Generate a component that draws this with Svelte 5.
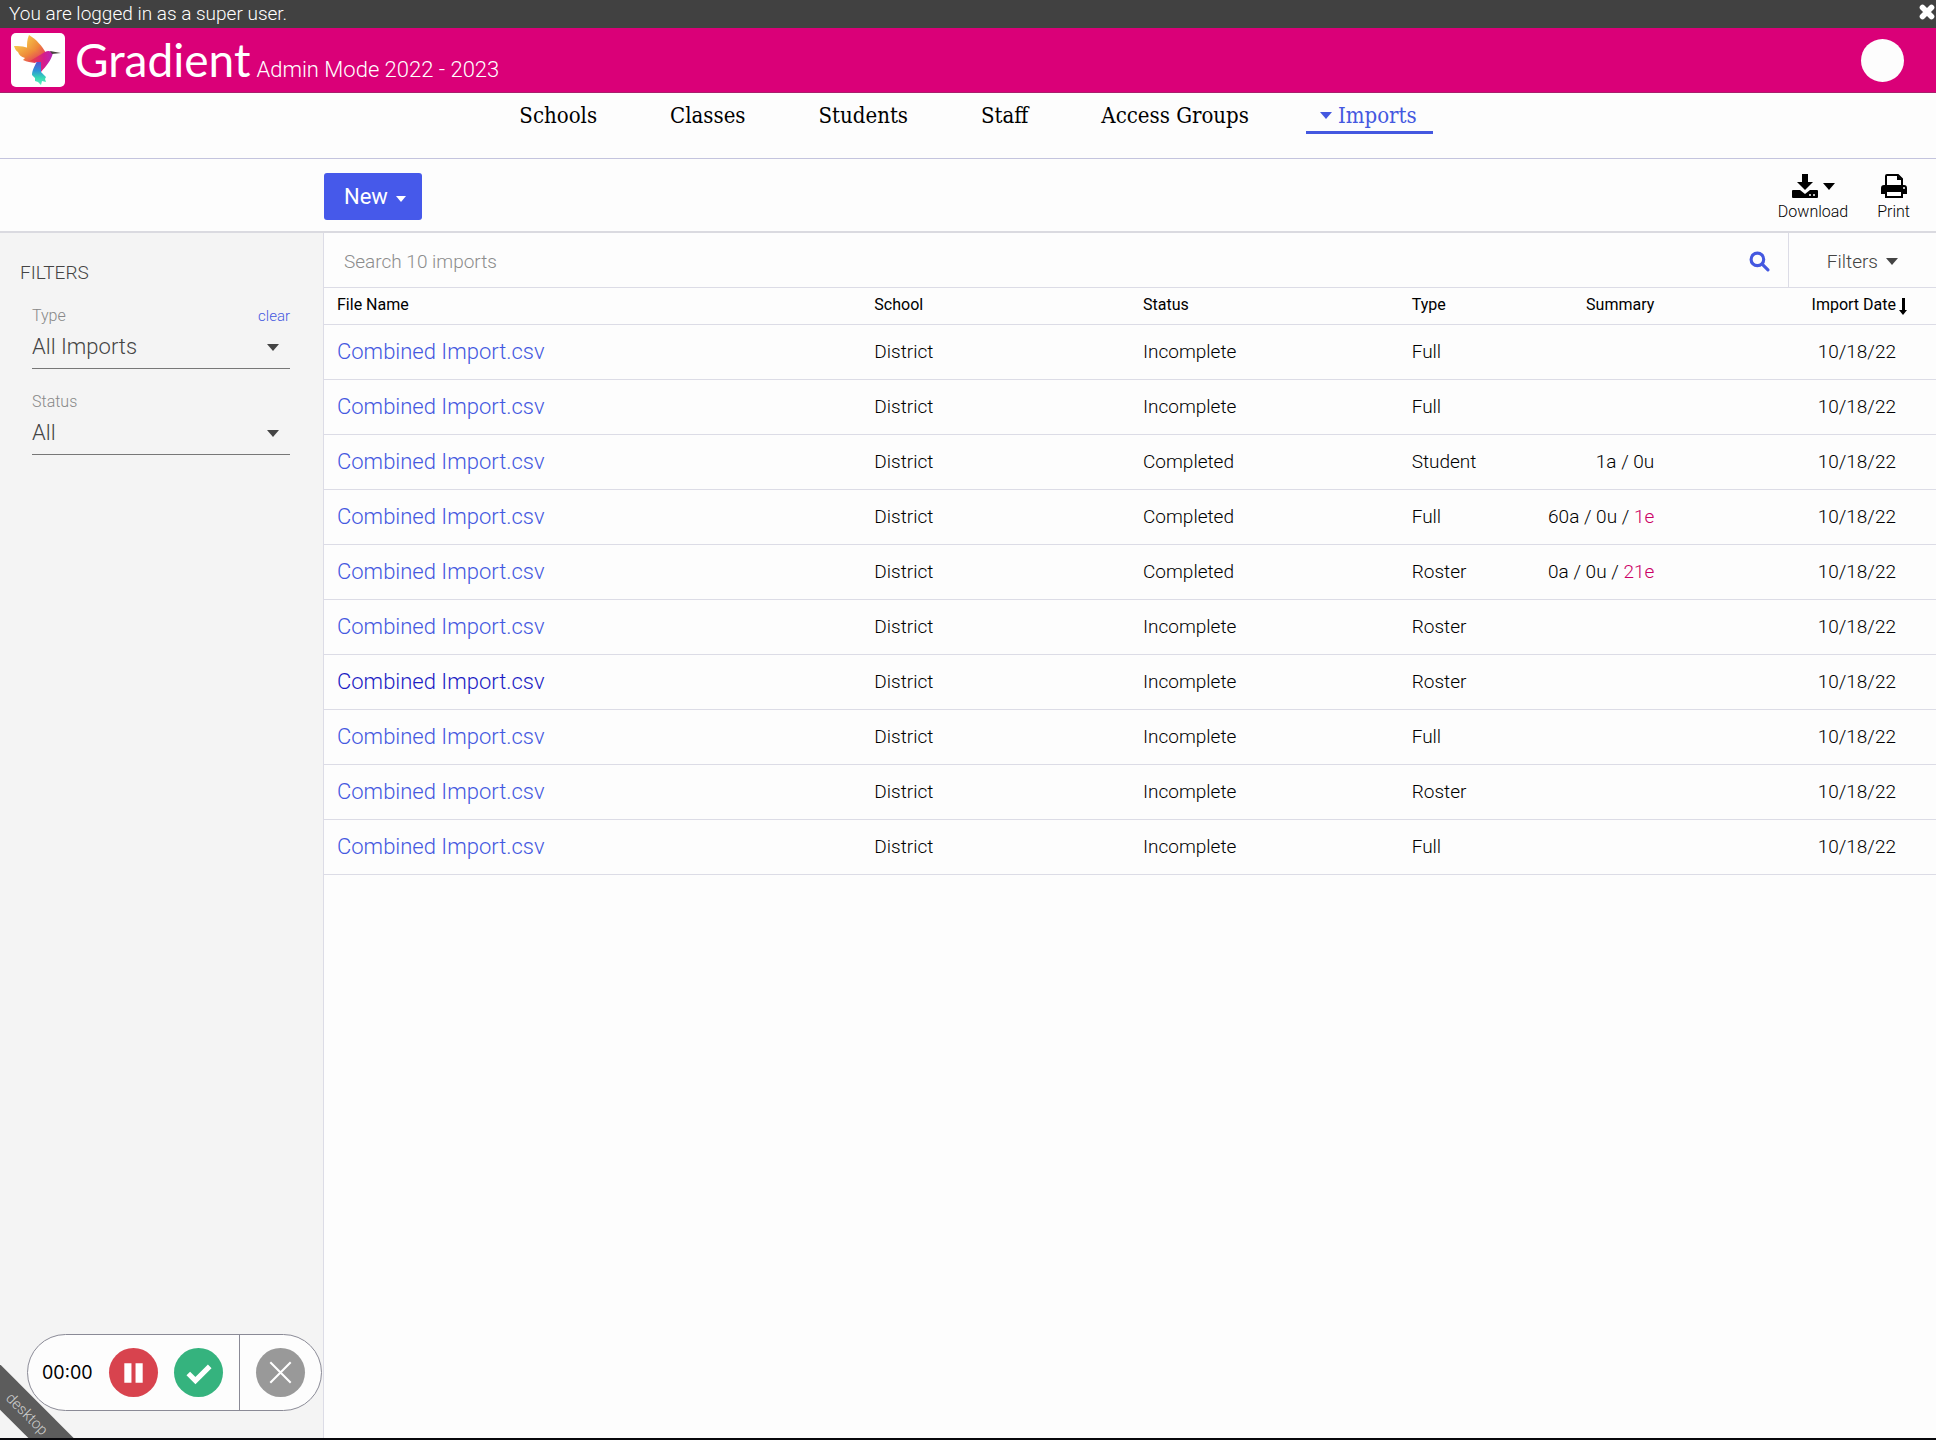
<script lang="ts">
	interface ImportRow {
		id: number;
		status: string;
		type: string;
		summary?: string;
		errors?: string;
		visited?: boolean;
	}

	const navItems = ['Schools', 'Classes', 'Students', 'Staff', 'Access Groups', 'Imports'];

	const imports: ImportRow[] = [
		{ id: 1, status: 'Incomplete', type: 'Full' },
		{ id: 2, status: 'Incomplete', type: 'Full' },
		{ id: 3, status: 'Completed', type: 'Student', summary: '1a / 0u' },
		{ id: 4, status: 'Completed', type: 'Full', summary: '60a / 0u', errors: '1e' },
		{ id: 5, status: 'Completed', type: 'Roster', summary: '0a / 0u', errors: '21e' },
		{ id: 6, status: 'Incomplete', type: 'Roster' },
		{ id: 7, status: 'Incomplete', type: 'Roster', visited: true },
		{ id: 8, status: 'Incomplete', type: 'Full' },
		{ id: 9, status: 'Incomplete', type: 'Roster' },
		{ id: 10, status: 'Incomplete', type: 'Full' }
	];

	let activeNav = $state('Imports');
	let showBanner = $state(true);
	let search = $state('');
	let typeFilter = $state('All Imports');
	let statusFilter = $state('All');

	let rows = $derived(
		imports.filter(
			(row) =>
				(typeFilter === 'All Imports' || row.type === typeFilter) &&
				(statusFilter === 'All' || row.status === statusFilter) &&
				'combined import.csv'.includes(search.toLowerCase().trim())
		)
	);
</script>

{#snippet caret()}
	<svg class="caret" viewBox="0 0 12 7" aria-hidden="true"><path d="M0 0h12L6 7z" fill="currentColor" /></svg>
{/snippet}

<div class="app">
	{#if showBanner}
		<div class="banner">
			<span>You are logged in as a super user.</span>
			<button class="banner-close" aria-label="Close" onclick={() => (showBanner = false)}>
				<svg viewBox="0 0 16 16">
					<path d="M4 4l8 8M12 4l-8 8" stroke="currentColor" stroke-width="5" stroke-linecap="round" />
				</svg>
			</button>
		</div>
	{/if}

	<header class="header">
		<svg class="logo" viewBox="0 0 54 54" aria-hidden="true">
			<defs>
				<linearGradient id="wing" x1="0" y1="0" x2="1" y2="1">
					<stop offset="0" stop-color="#f5c84a" />
					<stop offset="0.5" stop-color="#ee8a3a" />
					<stop offset="1" stop-color="#e0246a" />
				</linearGradient>
				<linearGradient id="body" x1="0" y1="0" x2="1" y2="0">
					<stop offset="0" stop-color="#e8453c" />
					<stop offset="0.6" stop-color="#d61b8c" />
					<stop offset="1" stop-color="#b527b8" />
				</linearGradient>
				<linearGradient id="tail" x1="0" y1="0" x2="0" y2="1">
					<stop offset="0" stop-color="#5a4fd0" />
					<stop offset="0.4" stop-color="#2f93d8" />
					<stop offset="0.7" stop-color="#38d8b4" />
					<stop offset="1" stop-color="#5cf0c0" />
				</linearGradient>
			</defs>
			<rect width="54" height="54" rx="5" fill="#fff" />
			<path d="M18 2c7 4 13 11 17 18l-7 8-12-13c0-4 0-9 2-13z" fill="url(#wing)" />
			<path d="M3 13c8 0 16 1 22 6l5 6-6 5c-4-1-8-1-12-3l2-2c-4-1-6-3-7-6-2-1-3-3-4-6z" fill="url(#wing)" />
			<path d="M26 28l4 1v10l5 5-1 2 1 3-4-1-1 4-3-3-3-1v-3l-3-3c0-5 3-9 5-14z" fill="url(#tail)" />
			<path d="M19 28c5-3 10-6 15-9 3-2 6-1 8 1-2 8-7 13-12 19v-10c-4 0-7 0-11-1z" fill="url(#body)" />
			<path d="M39 18l11 2-9 1z" fill="#4a4440" />
		</svg>
		<span class="brand">Gradient</span>
		<span class="mode">Admin Mode 2022 - 2023</span>
		<button class="avatar" aria-label="Account"></button>
	</header>

	<nav class="nav">
		{#each navItems as item (item)}
			<a href="#{item}" class:active={item === activeNav} onclick={() => (activeNav = item)}>
				{#if item === activeNav}{@render caret()}{/if}{item}
			</a>
		{/each}
	</nav>

	<div class="toolbar">
		<button class="new-btn">New {@render caret()}</button>
		<div class="tools">
			<button class="tool">
				<span class="tool-icon">
					<svg viewBox="0 0 26 24" width="26" height="24" fill="currentColor">
						<path d="M10 0h6v8h5l-8 8-8-8h5z" />
						<path d="M1 16h7l5 4 5-4h7q1 0 1 1v6q0 1-1 1H1q-1 0-1-1v-6q0-1 1-1z" />
						<circle cx="18" cy="21" r="1" fill="#fff" />
						<circle cx="22" cy="21" r="1" fill="#fff" />
					</svg>
					{@render caret()}
				</span>
				Download
			</button>
			<button class="tool">
				<span class="tool-icon">
					<svg viewBox="0 0 26 24" width="26" height="24">
						<path d="M5 12V2q0-1 1-1h11l4 4v7" fill="#fff" stroke="currentColor" stroke-width="2" />
						<path d="M16 1v5h5z" fill="currentColor" />
						<path d="M3 11h20q3 0 3 3v6h-5v-3H5v3H0v-6q0-3 3-3z" fill="currentColor" />
						<path d="M5 17h16v6H5z" fill="#fff" stroke="currentColor" stroke-width="2" />
						<circle cx="23" cy="14" r="1" fill="#fff" />
					</svg>
				</span>
				Print
			</button>
		</div>
	</div>

	<div class="content">
		<aside class="sidebar">
			<h2>FILTERS</h2>
			<div class="filter">
				<div class="filter-head">
					<label for="type-filter">Type</label>
					<button class="clear" onclick={() => (typeFilter = 'All Imports')}>clear</button>
				</div>
				<div class="select-wrap">
					<select id="type-filter" bind:value={typeFilter}>
						<option>All Imports</option>
						<option>Full</option>
						<option>Student</option>
						<option>Roster</option>
					</select>
					{@render caret()}
				</div>
			</div>
			<div class="filter">
				<div class="filter-head">
					<label for="status-filter">Status</label>
				</div>
				<div class="select-wrap">
					<select id="status-filter" bind:value={statusFilter}>
						<option>All</option>
						<option>Completed</option>
						<option>Incomplete</option>
					</select>
					{@render caret()}
				</div>
			</div>
		</aside>

		<main class="main">
			<div class="search-row">
				<input type="text" aria-label="Search imports" placeholder="Search 10 imports" bind:value={search} />
				<button class="search-btn" aria-label="Search">
					<svg viewBox="0 0 20 20" fill="none" stroke="currentColor" stroke-width="3">
						<circle cx="8" cy="8" r="6" />
						<path d="M13 13l5 5" stroke-linecap="round" />
					</svg>
				</button>
				<button class="filters-btn">Filters {@render caret()}</button>
			</div>

			<table>
				<thead>
					<tr>
						<th class="col-file">File Name</th>
						<th class="col-wide">School</th>
						<th class="col-wide">Status</th>
						<th class="col-half">Type</th>
						<th class="col-half right">Summary</th>
						<th class="col-wide date">
							<span class="sorted">
								Import Date
								<svg class="sort-arrow" viewBox="0 0 8 18" fill="currentColor" aria-hidden="true">
									<path d="M3 0h3v12h2l-4 5-4-5h3z" />
								</svg>
							</span>
						</th>
					</tr>
				</thead>
				<tbody>
					{#each rows as row (row.id)}
						<tr>
							<td><a class="file" class:visited={row.visited} href="#import-{row.id}">Combined Import.csv</a></td>
							<td>District</td>
							<td>{row.status}</td>
							<td>{row.type}</td>
							<td class="right">
								{row.summary ?? ''}{#if row.errors}{' / '}<span class="errors">{row.errors}</span>{/if}
							</td>
							<td class="date">10/18/22</td>
						</tr>
					{/each}
				</tbody>
			</table>
		</main>
	</div>

	<div class="ribbon"><span>desktop</span></div>

	<div class="recorder">
		<div class="recorder-main">
			<span class="time">00:00</span>
			<button class="round pause" aria-label="Pause">
				<svg viewBox="0 0 48 48" fill="#fff"><path d="M15 15h7v19h-7zM26 15h7v19h-7z" /></svg>
			</button>
			<button class="round done" aria-label="Finish">
				<svg viewBox="0 0 48 48" fill="none" stroke="#fff" stroke-width="5"><path d="M14 25l7 7 14-14" /></svg>
			</button>
		</div>
		<div class="recorder-side">
			<button class="round cancel" aria-label="Cancel">
				<svg viewBox="0 0 48 48" fill="none" stroke="#fff" stroke-width="2"><path d="M14 14l20 20M34 14L14 34" /></svg>
			</button>
		</div>
	</div>
</div>

<style>
	:global(body) {
		margin: 0;
		background: #fdfdfd;
	}

	.app {
		--blue: #4458e0;
		--pink: #da0078;
		--line: #dcdce6;
		display: flex;
		flex-direction: column;
		box-sizing: border-box;
		min-height: 100vh;
		border-bottom: 2px solid #08080c;
		font-family: Roboto, "Liberation Sans", sans-serif;
		font-weight: 300;
		font-size: 19px;
		color: #000;
	}

	button,
	input,
	select {
		margin: 0;
		padding: 0;
		border: none;
		background: none;
		font: inherit;
		color: inherit;
	}

	button {
		cursor: pointer;
	}

	a {
		text-decoration: none;
	}

	.caret {
		width: 12px;
		height: 7px;
	}

	.banner {
		display: flex;
		justify-content: space-between;
		align-items: center;
		height: 26px;
		padding: 0 0 2px 9px;
		background: #414141;
		color: #fff;
	}

	.banner-close {
		display: flex;
	}

	.banner-close svg {
		width: 18px;
		height: 18px;
		margin-bottom: 2px;
	}

	.header {
		display: flex;
		align-items: center;
		height: 64px;
		padding: 0 32px 0 11px;
		background: var(--pink);
		border-bottom: 1px solid #a8206c;
		color: #fff;
	}

	.logo {
		width: 54px;
		height: 54px;
	}

	.brand {
		margin-left: 10px;
		font-family: Lato, sans-serif;
		font-size: 46px;
		font-weight: 400;
		line-height: 64px;
	}

	.mode {
		margin: 18px 0 0 6px;
		font-size: 22px;
	}

	.avatar {
		width: 43px;
		height: 43px;
		margin-left: auto;
		border-radius: 50%;
		background: #fdfdfd;
	}

	.nav {
		display: flex;
		justify-content: center;
		align-items: flex-start;
		gap: 41px;
		height: 65px;
		border-bottom: 1px solid #c4c4de;
	}

	.nav a {
		display: flex;
		align-items: center;
		box-sizing: border-box;
		height: 41px;
		padding: 6px 16px 0;
		border-bottom: 3px solid transparent;
		color: #000;
		font-family: "Roboto Slab", "DejaVu Serif Condensed", "DejaVu Serif", serif;
		font-size: 22px;
		font-weight: 400;
	}

	.nav a.active {
		padding: 6px 16px 0 14px;
		border-bottom-color: var(--blue);
		color: var(--blue);
	}

	.nav .caret {
		margin-right: 6px;
	}

	.toolbar {
		display: flex;
		justify-content: space-between;
		align-items: center;
		height: 69px;
		padding: 3px 26px 0 324px;
		border-bottom: 2px solid #dadae0;
	}

	.new-btn {
		display: flex;
		align-items: center;
		gap: 8px;
		height: 47px;
		padding: 0 16px 0 20px;
		border-radius: 3px;
		background: #4659ea;
		color: #fff;
		font-size: 22px;
		font-weight: 400;
	}

	.new-btn .caret {
		width: 10px;
		height: 6px;
		margin-top: 4px;
	}

	.tools {
		display: flex;
		gap: 29px;
		margin-top: 3px;
	}

	.tool {
		display: flex;
		flex-direction: column;
		align-items: center;
		gap: 4px;
		font-size: 16px;
		line-height: 20px;
	}

	.tool-icon {
		display: flex;
		align-items: center;
		gap: 5px;
	}

	.content {
		display: flex;
		flex: 1;
	}

	.sidebar {
		box-sizing: border-box;
		width: 324px;
		padding: 28px 33px 0 32px;
		border-right: 1px solid var(--line);
		background: #f4f4f4;
		color: #444;
	}

	.sidebar h2 {
		margin: 0 0 19px -12px;
		font-size: 19px;
		font-weight: 300;
		line-height: 24px;
	}

	.filter {
		margin-bottom: 21px;
	}

	.filter-head {
		display: flex;
		justify-content: space-between;
		font-size: 16px;
		line-height: 24px;
		color: #888;
	}

	.clear {
		color: var(--blue);
		font-size: 15px;
	}

	.select-wrap {
		position: relative;
		height: 40px;
		border-bottom: 1px solid #777;
	}

	select {
		appearance: none;
		width: 100%;
		height: 36px;
		font-size: 22px;
	}

	.select-wrap .caret {
		position: absolute;
		right: 11px;
		top: 16px;
		pointer-events: none;
	}

	.main {
		flex: 1;
		min-width: 0;
	}

	.search-row {
		display: flex;
		height: 54px;
		border-bottom: 1px solid var(--line);
	}

	.search-row input {
		flex: 1;
		padding: 2px 0 0 20px;
		outline: none;
	}

	.search-row input::placeholder {
		color: #8c8c8c;
		opacity: 1;
	}

	.search-btn {
		display: flex;
		align-items: center;
		padding: 2px 18px 0;
		color: var(--blue);
	}

	.search-btn svg {
		width: 21px;
		height: 21px;
	}

	.filters-btn {
		display: flex;
		align-items: center;
		gap: 8px;
		padding: 2px 38px 0;
		border-left: 1px solid var(--line);
		color: #444;
	}

	table {
		width: 100%;
		border-collapse: collapse;
		table-layout: fixed;
	}

	th,
	td {
		box-sizing: border-box;
		padding: 0 13px;
		border-bottom: 1px solid var(--line);
		text-align: left;
		white-space: nowrap;
	}

	th {
		height: 36px;
		padding-bottom: 2px;
		font-size: 16px;
		font-weight: 400;
	}

	td {
		height: 55px;
	}

	.col-file {
		width: 33.333%;
	}

	.col-wide {
		width: 16.667%;
	}

	.col-half {
		width: 8.333%;
	}

	.right {
		text-align: right;
	}

	.date {
		padding-right: 40px;
		text-align: right;
	}

	.sorted {
		position: relative;
	}

	.sort-arrow {
		position: absolute;
		left: 100%;
		top: 3px;
		width: 8px;
		height: 18px;
		margin-left: 3px;
	}

	.file {
		color: var(--blue);
		font-size: 22px;
	}

	.file.visited {
		color: #1c1cc4;
	}

	.errors {
		color: #cc0066;
	}

	.ribbon {
		position: fixed;
		left: 0;
		bottom: 2px;
		width: 80px;
		height: 80px;
		overflow: hidden;
	}

	.ribbon span {
		position: absolute;
		left: -53px;
		top: 40px;
		width: 160px;
		height: 32px;
		background: #5c5c5c;
		color: #ccc;
		font-size: 15px;
		line-height: 32px;
		text-align: center;
		transform: rotate(45deg);
	}

	.recorder {
		position: fixed;
		left: 27px;
		bottom: 29px;
		display: flex;
		box-sizing: border-box;
		height: 77px;
		border: 1px solid #8a8a96;
		border-radius: 39px;
		background: #fdfdfd;
	}

	.recorder-main,
	.recorder-side {
		display: flex;
		align-items: center;
	}

	.recorder-main {
		gap: 16px;
		padding: 0 16px 0 14px;
		border-right: 1px solid #8a8a96;
	}

	.recorder-side {
		padding: 0 16px;
	}

	.time {
		font-family: Inter, sans-serif;
		font-size: 18px;
		font-weight: 400;
	}

	.round {
		display: flex;
		width: 49px;
		height: 49px;
		border-radius: 50%;
	}

	.pause {
		background: #d8434e;
	}

	.done {
		background: #35b37e;
	}

	.cancel {
		background: #999;
	}
</style>
